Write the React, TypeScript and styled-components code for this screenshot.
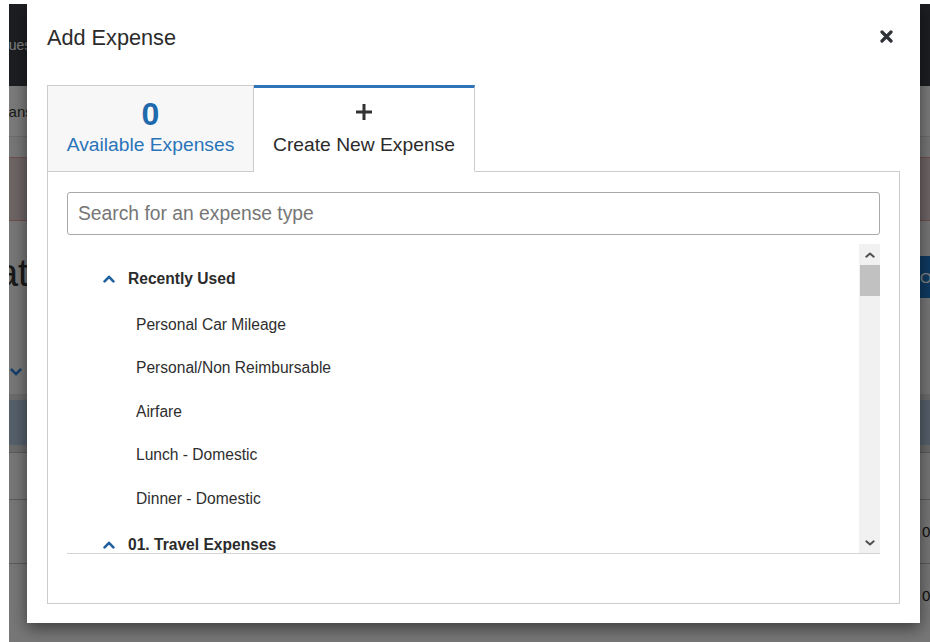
import React from "react";
import styled, { createGlobalStyle } from "styled-components";

const GlobalStyle = createGlobalStyle`
  html, body { margin: 0; padding: 0; background: #ffffff; }
  body { font-family: "Liberation Sans", Arial, sans-serif; color: #333; }
  * { box-sizing: border-box; }
`;

/* ---------- window that holds the app and the dialog ---------- */

const Viewport = styled.div`
  position: relative;
  margin: 4px 0 0 9px;
  width: 921px;
  height: 638px;
  overflow: hidden;
`;

/* ---------- the expense report page behind the dialog ---------- */

const Page = styled.div`
  width: 1000px;
  height: 100%;
  background: #eeeeee;
  color: #333;
`;

const NavBar = styled.div`
  height: 82px;
  background: #383c42;
  display: flex;
  align-items: center;
`;

const NavItem = styled.span`
  color: #ffffff;
  font-size: 14px;
  margin-left: -26px;
`;

const SubNav = styled.div`
  height: 51px;
  background: #f6f6f6;
  border-bottom: 1px solid #dddddd;
  display: flex;
  align-items: center;
`;

const SubNavItem = styled.span`
  font-size: 15px;
  color: #333;
  margin-left: -14px;
`;

const Alert = styled.div`
  margin-top: 20px;
  height: 64px;
  background: #dccaca;
  border-top: 1px solid #e39a9a;
  border-bottom: 1px solid #e39a9a;
`;

const HeadingRow = styled.div`
  margin-top: 27px;
  display: flex;
  align-items: center;
`;

const Heading = styled.h1`
  margin: 0 0 0 -39.5px;
  font-size: 38px;
  line-height: 48px;
  font-weight: 400;
  color: #333;
`;

const PrimaryButton = styled.button`
  margin-left: auto;
  margin-top: 8px;
  width: 93px;
  height: 42px;
  border: 0;
  background: #1c74c4;
  color: #ffffff;
  font: 15px "Liberation Sans", Arial, sans-serif;
  text-align: left;
  padding: 0 0 0 4px;
`;

const FilterRow = styled.div`
  height: 96px;
  display: flex;
  align-items: flex-end;
  padding: 0 0 18px 1px;
  color: #2a7fd4;
`;

const TableHead = styled.div`
  height: 58px;
  border-top: 6px solid #d6d6d6;
  border-bottom: 7px solid #d6d6d6;
  background: #acc0d6;
`;

const TableRow = styled.div<{ $h: number }>`
  height: ${(p) => p.$h}px;
  border-top: 1px solid #b4b4b4;
  display: grid;
  grid-template-columns: 1fr 89px;
  align-items: center;
`;

const DateCell = styled.span`
  font-size: 15px;
  color: #222;
  grid-column: 2;
  padding-left: 2px;
`;

const Dimmer = styled.div`
  position: absolute;
  inset: 0;
  background: rgba(0, 0, 0, 0.5);
  z-index: 1;
`;

/* ---------- the Add Expense dialog ---------- */

const Modal = styled.div`
  position: absolute;
  left: 18px;
  top: 0;
  width: 893px;
  height: 619px;
  z-index: 2;
  background: #ffffff;
  box-shadow: 0 5px 15px rgba(0, 0, 0, 0.5);
  padding: 0 20px 19px;
  display: flex;
  flex-direction: column;
`;

const Header = styled.div`
  height: 81px;
  padding-top: 21px;
  display: flex;
  align-items: flex-start;
  justify-content: space-between;
`;

const Title = styled.h2`
  margin: 0;
  font-size: 21.7px;
  line-height: 26px;
  font-weight: 400;
  color: #2b2b2b;
`;

const CloseButton = styled.button`
  margin: 5px 7px 0 0;
  padding: 0;
  border: 0;
  background: none;
  width: 13px;
  height: 13px;
  display: flex;
  cursor: pointer;
`;

const TabList = styled.div`
  display: flex;
  height: 87px;
  position: relative;
  z-index: 1;
  margin-bottom: -1px;
`;

const Tab = styled.div<{ $active?: boolean; $w: number }>`
  width: ${(p) => p.$w}px;
  height: 87px;
  display: flex;
  flex-direction: column;
  align-items: center;
  background: ${(p) => (p.$active ? "#ffffff" : "#f7f7f7")};
  border: 1px solid #cccccc;
  border-top: ${(p) => (p.$active ? "3px solid #2f73b8" : "1px solid #cccccc")};
  border-bottom: ${(p) => (p.$active ? "1px solid #ffffff" : "1px solid #cccccc")};
  border-left: ${(p) => (p.$active ? "none" : "1px solid #cccccc")};
  padding-top: ${(p) => (p.$active ? 10 : 12)}px;
  cursor: pointer;
`;

const TabFigure = styled.div`
  height: 32px;
  display: flex;
  align-items: center;
  justify-content: center;
  font-size: 32px;
  font-weight: 700;
  line-height: 32px;
  color: #1f6aad;
`;

const TabIcon = styled.div`
  height: 32px;
  display: flex;
  align-items: center;
  justify-content: center;
  padding-bottom: 5px;
`;

const TabLabel = styled.div<{ $active?: boolean }>`
  font-size: 19.25px;
  line-height: 30px;
  color: ${(p) => (p.$active ? "#2b2b2b" : "#2a74b9")};
  white-space: nowrap;
`;

const Panel = styled.div`
  flex: 1;
  border: 1px solid #cccccc;
  padding: 20px 19px 0;
`;

const Search = styled.input`
  display: block;
  width: 100%;
  height: 43px;
  border: 1px solid #a9a9a9;
  border-radius: 3px;
  padding: 0 10px;
  font: 19.3px "Liberation Sans", Arial, sans-serif;
  color: #333;
  outline: none;
  &::placeholder { color: #767676; }
`;

const ListBox = styled.div`
  margin-top: 9px;
  height: 310px;
  display: flex;
  border-bottom: 1px solid #d4d4d4;
`;

const ListScroll = styled.div`
  flex: 1;
  overflow: hidden;
  padding-top: 11px;
`;

const GroupHeader = styled.div`
  height: 48px;
  display: flex;
  align-items: center;
  gap: 13px;
  padding-left: 36px;
  font-size: 15.6px;
  font-weight: 700;
  color: #2b2b2b;
  flex-shrink: 0;
`;

const Item = styled.div`
  height: 43.5px;
  display: flex;
  align-items: center;
  padding-left: 69px;
  font-size: 15.6px;
  color: #2e2e2e;
`;

const ScrollTrack = styled.div`
  width: 21px;
  background: #f1f1f1;
  display: flex;
  flex-direction: column;
`;

const ScrollArrow = styled.div`
  height: 21px;
  display: flex;
  align-items: center;
  justify-content: center;
`;

const ScrollThumb = styled.div`
  height: 31px;
  margin-left: 1px;
  background: #c1c1c1;
`;

const ScrollSpacer = styled.div`
  flex: 1;
`;

/* ---------- small drawings ---------- */

const Chevron = ({ up, color, w, h, sw }: { up: boolean; color: string; w: number; h: number; sw: number }) => (
  <svg width={w} height={h} viewBox={`0 0 ${w} ${h}`} fill="none">
    <polyline
      points={
        up
          ? `${sw / 2 + 0.3},${h - sw / 2 - 0.3} ${w / 2},${sw / 2 + 0.5} ${w - sw / 2 - 0.3},${h - sw / 2 - 0.3}`
          : `${sw / 2 + 0.3},${sw / 2 + 0.3} ${w / 2},${h - sw / 2 - 0.5} ${w - sw / 2 - 0.3},${sw / 2 + 0.3}`
      }
      stroke={color}
      strokeWidth={sw}
      strokeLinecap="round"
      strokeLinejoin="round"
    />
  </svg>
);

const CloseIcon = () => (
  <svg width="13" height="13" viewBox="0 0 13 13">
    <path d="M2 2 L11 11 M11 2 L2 11" stroke="#2f3338" strokeWidth="3.2" strokeLinecap="round" />
  </svg>
);

const PlusIcon = () => (
  <svg width="18" height="18" viewBox="0 0 18 18">
    <path d="M9 1 V17 M1 9 H17" stroke="#333" strokeWidth="3" />
  </svg>
);

const recent = [
  "Personal Car Mileage",
  "Personal/Non Reimbursable",
  "Airfare",
  "Lunch - Domestic",
  "Dinner - Domestic",
];

const travel = ["Hotel", "Taxi", "Parking"];

export default function App() {
  return (
    <>
      <GlobalStyle />
      <Viewport>
        <Page>
          <NavBar>
            <NavItem>Requests</NavItem>
          </NavBar>
          <SubNav>
            <SubNavItem>Transactions</SubNavItem>
          </SubNav>
          <Alert />
          <HeadingRow>
            <Heading>Data</Heading>
            <PrimaryButton>Options</PrimaryButton>
          </HeadingRow>
          <FilterRow>
            <Chevron up={false} color="#2a7fd4" w={12} h={8} sw={2.6} />
          </FilterRow>
          <TableHead />
          <TableRow $h={47} />
          <TableRow $h={64}>
            <DateCell>02/14/2025</DateCell>
          </TableRow>
          <TableRow $h={64}>
            <DateCell>02/11/2025</DateCell>
          </TableRow>
        </Page>
        <Dimmer />
        <Modal role="dialog" aria-label="Add Expense">
          <Header>
            <Title>Add Expense</Title>
            <CloseButton aria-label="Close">
              <CloseIcon />
            </CloseButton>
          </Header>
          <TabList>
            <Tab $w={207}>
              <TabFigure>0</TabFigure>
              <TabLabel>Available Expenses</TabLabel>
            </Tab>
            <Tab $active $w={221}>
              <TabIcon>
                <PlusIcon />
              </TabIcon>
              <TabLabel $active>Create New Expense</TabLabel>
            </Tab>
          </TabList>
          <Panel>
            <Search placeholder="Search for an expense type" />
            <ListBox>
              <ListScroll>
                <GroupHeader>
                  <Chevron up color="#21609e" w={12} h={8} sw={2.6} />
                  Recently Used
                </GroupHeader>
                {recent.map((name) => (
                  <Item key={name}>{name}</Item>
                ))}
                <GroupHeader>
                  <Chevron up color="#21609e" w={12} h={8} sw={2.6} />
                  01. Travel Expenses
                </GroupHeader>
                {travel.map((name) => (
                  <Item key={name}>{name}</Item>
                ))}
              </ListScroll>
              <ScrollTrack>
                <ScrollArrow>
                  <Chevron up color="#505050" w={10} h={6} sw={2} />
                </ScrollArrow>
                <ScrollThumb />
                <ScrollSpacer />
                <ScrollArrow>
                  <Chevron up={false} color="#505050" w={10} h={6} sw={2} />
                </ScrollArrow>
              </ScrollTrack>
            </ListBox>
          </Panel>
        </Modal>
      </Viewport>
    </>
  );
}
